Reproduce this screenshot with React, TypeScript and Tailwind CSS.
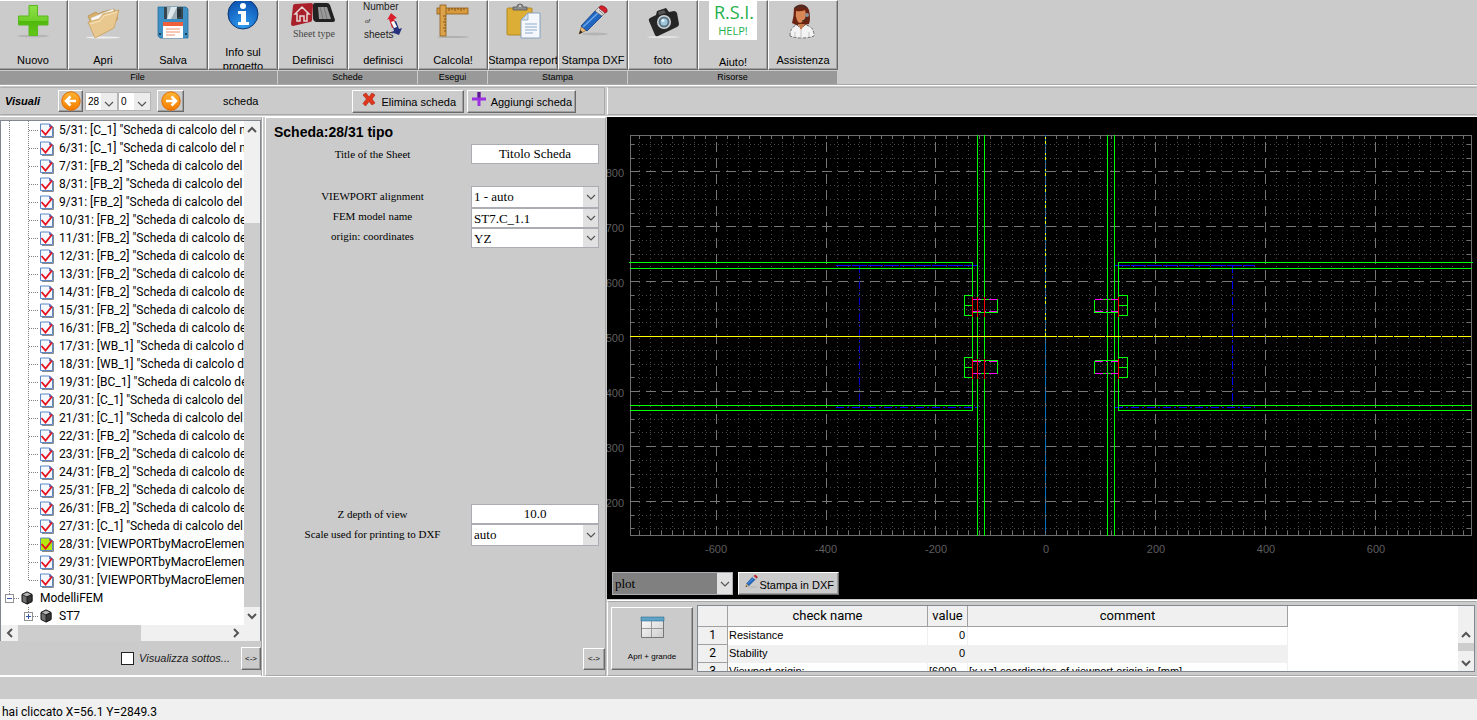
import React from "react";

const sans = "font-['Liberation_Sans',Arial,sans-serif]";
const serif = "font-['Liberation_Serif','Times_New_Roman',serif]";
const ui = "font-['Roboto','Segoe_UI',sans-serif]";
const raised =
  "border border-t-white border-l-white border-r-[#696969] border-b-[#696969] shadow-[inset_-1px_-1px_0_#a0a0a0] bg-[#cbcbcb]";

/* ---------- icons ---------- */

function PlusIcon() {
  return (
    <svg width="36" height="36" viewBox="0 0 36 36">
      <defs>
        <linearGradient id="pl" x1="0" y1="0" x2="0" y2="1">
          <stop offset="0" stopColor="#8fe04a" />
          <stop offset="0.5" stopColor="#6fcf2a" />
          <stop offset="0.51" stopColor="#4fb80c" />
          <stop offset="1" stopColor="#62c818" />
        </linearGradient>
      </defs>
      <ellipse cx="18" cy="33" rx="16" ry="1.3" fill="#b5b5b5" />
      <path d="M14 2.500h8.500v10.500H33v9H22.500v10.500H14V22H3.500v-9H14z" fill="url(#pl)" stroke="#58b81c" strokeWidth="1" />
    </svg>
  );
}

function FolderIcon() {
  return (
    <svg width="38" height="36" viewBox="0 0 38 36">
      <ellipse cx="19" cy="34.500" rx="17" ry="1" fill="#eee" />
      <path d="M4 13l8-4 2 2 4-2 12-3 4 10-22 16z" fill="#d9b06a" stroke="#b98c48" strokeWidth=".7" />
      <path d="M7 15L29 6l4 9-24 13z" fill="#fafafa" stroke="#ccc" strokeWidth=".5" />
      <path d="M4 19l11-3 4-5 16-4-5 18-19 10z" fill="#e8c88e" stroke="#c59a55" strokeWidth=".7" />
      <path d="M6 21l10-3 4-5 13-4" fill="none" stroke="#f7e4bd" />
    </svg>
  );
}

function FloppyIcon() {
  return (
    <svg width="34" height="36" viewBox="0 0 34 36">
      <path d="M2 4h28l2 2v29H4l-2-2z" fill="#3d8fc4" stroke="#2a6f9f" strokeWidth=".8" />
      <rect x="8" y="4" width="19" height="12" fill="#37474f" />
      <path d="M11 4h10v12H11z" fill="#9fb0b8" />
      <path d="M15 4h6l-6 12h-4z" fill="#dfe8ec" />
      <rect x="21" y="6" width="4" height="8" fill="#26343b" />
      <rect x="7" y="19" width="20" height="16" fill="#fff" />
      <rect x="7" y="19" width="20" height="4" fill="#f0603a" />
      <path d="M10 26h14M10 29h14M10 32h9" stroke="#f0906f" strokeWidth="1" />
      <rect x="3" y="30" width="2" height="2" fill="#173f5a" />
      <rect x="29" y="30" width="2" height="2" fill="#173f5a" />
    </svg>
  );
}

function InfoIcon() {
  return (
    <svg width="34" height="32" viewBox="0 0 34 32">
      <defs>
        <radialGradient id="inf" cx=".5" cy=".9" r=".9">
          <stop offset="0" stopColor="#2f9cf0" />
          <stop offset="1" stopColor="#0a4fae" />
        </radialGradient>
      </defs>
      <circle cx="17" cy="13" r="15" fill="url(#inf)" stroke="#0a3670" />
      <circle cx="17" cy="5" r="3" fill="#fff" />
      <path d="M12 10h8v11h3v3H12v-3h3v-8h-3z" fill="#fff" />
    </svg>
  );
}

function SheetTypeIcon() {
  return (
    <svg width="48" height="40" viewBox="0 0 48 40">
      <path d="M4 5q0-2 2-2l16-1q2 0 2 2l-1 15q0 2-2 2L4 25q-2 0-2-2z" fill="#a9202b" />
      <path d="M6 13l7-7 7 7h-2v7h-3v-5h-4v5H8v-7z" fill="none" stroke="#e6d6d6" strokeWidth="1.500" />
      <path d="M24 4q0-2 2-2h12q2 0 3 2l5 15q0 2-2 2H27q-2 0-3-3z" fill="#222" />
      <path d="M29 6h9l4 12H30z" fill="#9a9a9a" />
      <path d="M31 6l3 12M35 6l3 12" stroke="#777" />
      <text x="4" y="36" fontSize="10" fill="#444" fontFamily="Liberation Serif, serif">Sheet type</text>
    </svg>
  );
}

function NumberIcon() {
  return (
    <svg width="44" height="40" viewBox="0 0 44 40">
      <text x="2" y="9" fontSize="10" fill="#222" fontFamily="Liberation Sans, sans-serif">Number</text>
      <text x="4" y="22" fontSize="6" fontStyle="italic" fill="#222" fontFamily="Liberation Sans, sans-serif">of</text>
      <text x="3" y="37" fontSize="10" fill="#222" fontFamily="Liberation Sans, sans-serif">sheets</text>
      <path d="M26 19l4-7 6 5-3 1 3 7-5 2-3-9z" fill="#d8202c" />
      <path d="M31 22l4-2 3 8 3-1-3 7-8-3 3-1z" fill="#27307c" />
      <path d="M30 21l3-1 3 6-3 1z" fill="#fff" />
    </svg>
  );
}

function RulerIcon() {
  return (
    <svg width="36" height="36" viewBox="0 0 36 36">
      <ellipse cx="18" cy="34" rx="16" ry="1" fill="#b0b0b0" />
      <rect x="2" y="5" width="31" height="6" fill="#d79a3f" stroke="#8e5d18" strokeWidth=".8" />
      <rect x="5" y="2" width="6" height="31" fill="#dda34a" stroke="#8e5d18" strokeWidth=".8" />
      <path d="M14 5v3M17 5v2M20 5v3M23 5v2M26 5v3M29 5v2M8 13h3M9 16h2M8 19h3M9 22h2M8 25h3M9 28h2" stroke="#6b430c" strokeWidth=".8" />
    </svg>
  );
}

function ClipboardIcon() {
  return (
    <svg width="38" height="38" viewBox="0 0 38 38">
      <rect x="3" y="5" width="25" height="27" rx="1" fill="#dcae35" stroke="#a87d18" strokeWidth=".8" />
      <path d="M9 7V4h4q0-3 3-3t3 3h4v3z" fill="#8d8d8d" stroke="#555" strokeWidth=".8" />
      <circle cx="16" cy="3" r="1" fill="#ddd" />
      <path d="M24 10h12v25H17V17z" fill="#f4f8fc" stroke="#7f9dbd" strokeWidth=".9" />
      <path d="M24 10v7h-7z" fill="#cfdcea" stroke="#7f9dbd" strokeWidth=".7" />
      <path d="M21 21h12M21 24h12M21 27h12M21 30h8" stroke="#8fabc8" />
    </svg>
  );
}

function PencilIcon({ size }: { size: number }) {
  return (
    <svg width={size} height={size} viewBox="0 0 36 36">
      <ellipse cx="20" cy="31" rx="13" ry="1.500" fill="#b4b4b4" />
      <path d="M4 31l3-9 5 5z" fill="#e8b878" stroke="#8a5b2a" strokeWidth=".6" />
      <path d="M4 31l1.500-4 2 2.500z" fill="#222" />
      <path d="M6 23L20 8l7 5L12 28z" fill="#2166c0" stroke="#0e3c80" strokeWidth=".8" />
      <path d="M8 24L23 10" stroke="#6aa7ea" strokeWidth="1.600" />
      <path d="M20 8l4-4 7 5-4 4z" fill="#d9d9d9" stroke="#555" strokeWidth=".6" />
      <path d="M24 7l4 4M26 5l4 4" stroke="#777" strokeWidth=".8" />
      <path d="M25 3q2-1 5 1t2 5l-2 1-6-5z" fill="#d3202c" stroke="#801018" strokeWidth=".6" />
    </svg>
  );
}

function CameraIcon() {
  return (
    <svg width="38" height="36" viewBox="0 0 38 36">
      <ellipse cx="19" cy="34" rx="16" ry="1" fill="#e5e5e5" />
      <path d="M5 18q-1-2 1-3l6-3 1-4 9-3 3 4 5-1q2 0 3 2l2 11q0 2-2 3l-19 9q-2 1-3-1z" fill="#262626" />
      <path d="M14 9l6-2 2 3-7 2z" fill="#555" />
      <circle cx="20" cy="19" r="7" fill="#cfd6db" />
      <circle cx="20" cy="19" r="5.500" fill="#5d7482" />
      <circle cx="20" cy="19" r="3.500" fill="#9fc8df" />
      <circle cx="19" cy="17.500" r="1.500" fill="#e8f6ff" />
    </svg>
  );
}

function HelpIcon() {
  return (
    <svg width="48" height="39" viewBox="0 0 48 39">
      <rect width="48" height="39" fill="#fff" />
      <text x="25" y="18" textAnchor="middle" fontSize="18" fill="#1fb04c" fontFamily="Open Sans, sans-serif">R.S.I.</text>
      <text x="24" y="34" textAnchor="middle" fontSize="11" fill="#1fb04c" fontFamily="Open Sans, sans-serif">HELP!</text>
    </svg>
  );
}

function AssistantIcon() {
  return (
    <svg width="30" height="37" viewBox="0 0 30 37">
      <path d="M6 5q3-4 8-3.500T21 7q2 9 0 14l-5 1H8l-4-2Q6 13 6 5z" fill="#6b2412" />
      <path d="M8 8q5 1 9-1 2 6-1 10-2 3-4 3t-3-3q-2-4-1-9z" fill="#d98755" />
      <path d="M7 5q6-4 12 0" fill="none" stroke="#333" strokeWidth="1.200" />
      <path d="M19 12q1 5-5 6" fill="none" stroke="#333" />
      <circle cx="19" cy="12" r="2" fill="#8c939b" />
      <path d="M2 33q0-9 7-11l4 4 4-4q9 1 9 11-5 2-12 2T2 33z" fill="#f3f3f3" stroke="#555" strokeWidth=".8" strokeDasharray="3 1.500" />
      <path d="M10 21l3 6 4-6z" fill="#c97a4b" />
      <path d="M7 29v5M21 29v5M13 27v8" stroke="#c4c4c4" />
    </svg>
  );
}

function ArrowBall({ back }: { back?: boolean }) {
  return (
    <svg width="20" height="20" viewBox="0 0 20 20">
      <defs>
        <linearGradient id="ob" x1="0" y1="0" x2="0" y2="1">
          <stop offset="0" stopColor="#ffb433" />
          <stop offset="1" stopColor="#f57c00" />
        </linearGradient>
      </defs>
      <circle cx="10" cy="10" r="9.200" fill="url(#ob)" stroke="#e06a00" />
      <path
        d={back ? "M15 10H5M9.500 5.500L5 10l4.500 4.500" : "M5 10h10M10.500 5.500L15 10l-4.500 4.500"}
        fill="none"
        stroke="#fff"
        strokeWidth="2.600"
      />
    </svg>
  );
}

function Chevron({ dir = "down", bold }: { dir?: "down" | "up" | "left" | "right"; bold?: boolean }) {
  const d = {
    down: "M2 4l4 4 4-4",
    up: "M2 8l4-4 4 4",
    left: "M8 2L4 6l4 4",
    right: "M4 2l4 4-4 4",
  }[dir];
  return (
    <svg width="12" height="12" viewBox="0 0 12 12" className="shrink-0">
      <path d={d} fill="none" stroke="#555" strokeWidth={bold ? 2 : 1.2} />
    </svg>
  );
}

function PageIcon({ active }: { active?: boolean }) {
  return (
    <svg width="14" height="15" viewBox="0 0 14 15" className="shrink-0">
      <path d="M2 14.500h11.500V4" fill="none" stroke="#8a8a8a" />
      <path d="M.5 1h9l3 3v9.500H.5z" fill={active ? "#b4e610" : "#f3f9ff"} stroke="#5b87c7" />
      <path d="M9.500 1l3 3h-3z" fill="#5560a8" stroke="#5560a8" strokeWidth=".5" />
      <path d="M1.500 7l4 4.500L12 3.500" fill="none" stroke="#e8101c" strokeWidth="1.800" />
    </svg>
  );
}

function CubeIcon() {
  return (
    <svg width="12" height="14" viewBox="0 0 12 14" className="shrink-0">
      <path d="M6 1l5 2.500v7L6 13l-5-2.500v-7z" fill="#707070" stroke="#111" />
      <path d="M6 1l5 2.500L6 6 1 3.500z" fill="#b5b5b5" stroke="#111" strokeWidth=".8" />
      <path d="M6 6l5-2.500v7L6 13z" fill="#383838" stroke="#111" strokeWidth=".8" />
    </svg>
  );
}

/* ---------- toolbar ---------- */

type Tool = { label: string; icon: React.ReactNode; kind?: "two" | "flush" | "low" };
const groups: { name: string; tools: Tool[] }[] = [
  {
    name: "File",
    tools: [
      { label: "Nuovo", icon: <PlusIcon /> },
      { label: "Apri", icon: <FolderIcon /> },
      { label: "Salva", icon: <FloppyIcon /> },
      { label: "Info sul progetto", icon: <InfoIcon />, kind: "two" },
    ],
  },
  {
    name: "Schede",
    tools: [
      { label: "Definisci", icon: <SheetTypeIcon />, kind: "flush" },
      { label: "definisci", icon: <NumberIcon />, kind: "flush" },
    ],
  },
  { name: "Esegui", tools: [{ label: "Calcola!", icon: <RulerIcon /> }] },
  {
    name: "Stampa",
    tools: [
      { label: "Stampa report", icon: <ClipboardIcon /> },
      { label: "Stampa DXF", icon: <PencilIcon size={36} /> },
    ],
  },
  {
    name: "Risorse",
    tools: [
      { label: "foto", icon: <CameraIcon /> },
      { label: "Aiuto!", icon: <HelpIcon />, kind: "low" },
      { label: "Assistenza", icon: <AssistantIcon /> },
    ],
  },
];

const iconBox = {
  normal: "flex h-[52px] shrink-0 items-start pt-[2px]",
  flush: "flex h-[52px] shrink-0 items-start",
  low: "flex h-[54px] shrink-0 items-start",
  two: "flex h-[44px] shrink-0 items-start",
};

function Toolbar() {
  return (
    <div className="-ml-[2px] flex h-[85px] shrink-0 border-b border-[#a8a8a8]">
      {groups.map((g) => (
        <div key={g.name} className="flex flex-col">
          <div className="flex">
            {g.tools.map((t) => (
              <button key={t.label} type="button" className={`${raised} flex h-[70px] w-[70px] flex-col items-center overflow-hidden text-[11px]`}>
                <span className={iconBox[t.kind ?? "normal"]}>{t.icon}</span>
                <span className={t.kind === "two" ? "w-12 text-center leading-[14px]" : "whitespace-nowrap leading-[14px]"}>{t.label}</span>
              </button>
            ))}
          </div>
          <div className="mt-px h-[13px] border-r border-[#cbcbcb] bg-[#999] text-center text-[9px] leading-[12px]">{g.name}</div>
        </div>
      ))}
    </div>
  );
}

/* ---------- second bar ---------- */

function MiniSelect({ label, value }: { label: string; value: string }) {
  return (
    <span className="relative flex h-[19px] w-[33px] border border-[#b5b5b5] bg-white">
      <select aria-label={label} className="w-full appearance-none bg-white pl-[2px] text-[10px] outline-none">
        <option>{value}</option>
      </select>
      <span className="pointer-events-none absolute inset-y-0 right-0 flex w-4 items-end justify-center bg-[#ececec]">
        <Chevron />
      </span>
    </span>
  );
}

function ViewsBar() {
  return (
    <div className="flex h-[31px] shrink-0 border-t border-white pb-px pt-px">
      <div className="flex w-[605px] items-center border border-t-[#b0b0b0] border-r-[#a8a8a8] border-b-[#a8a8a8] border-l-transparent pl-1">
        <strong className="w-[53px] text-[11px] italic">Visuali</strong>
        <button type="button" aria-label="Precedente" className={`${raised} flex h-[22px] w-[25px] items-center justify-center`}>
          <ArrowBall back />
        </button>
        <span className="ml-[2px] flex">
          <MiniSelect label="Scheda" value="28" />
          <MiniSelect label="Vista" value="0" />
        </span>
        <button type="button" aria-label="Successiva" className={`${raised} ml-[6px] flex h-[22px] w-[27px] items-center justify-center`}>
          <ArrowBall />
        </button>
        <span className="ml-[39px] text-[11px]">scheda</span>
        <button type="button" className={`${raised} ml-auto flex h-[23px] w-[112px] items-center justify-between whitespace-nowrap pl-2 pr-[7px] text-[11px]`}>
          <svg width="16" height="15" viewBox="0 0 16 15" className="mb-1">
            <path d="M2 3l3-2 3 4 3-4 3 2-3 4 3 4-3 2-3-3.500L4.500 14 2 11.500 5.500 7z" fill="#e0361c" stroke="#a8200c" strokeWidth=".6" />
          </svg>
          <span className="pt-[3px]">Elimina scheda</span>
        </button>
        <button type="button" className={`${raised} ml-[3px] mr-7 flex h-[23px] w-[109px] items-center justify-between whitespace-nowrap pl-1 pr-[3px] text-[11px]`}>
          <svg width="14" height="14" viewBox="0 0 14 14" className="mb-1">
            <path d="M5.500 0h3v5.500H14v3H8.500V14h-3V8.500H0v-3h5.500z" fill="#9a30e0" />
            <path d="M5.500 0h3v5.500h-3z" fill="#5c1a90" />
          </svg>
          <span className="pt-[3px]">Aggiungi scheda</span>
        </button>
      </div>
      <div className="ml-[2px] flex-1 border border-t-[#b0b0b0] border-r-transparent border-b-[#a8a8a8] border-l-white" />
    </div>
  );
}

/* ---------- tree ---------- */

const N = '"Scheda di calcolo del nodo';
const kinds: [number, string][] = [
  [5, "[C_1] " + N], [6, "[C_1] " + N], [7, "[FB_2] " + N], [8, "[FB_2] " + N], [9, "[FB_2] " + N],
  [10, "[FB_2] " + N], [11, "[FB_2] " + N], [12, "[FB_2] " + N], [13, "[FB_2] " + N], [14, "[FB_2] " + N],
  [15, "[FB_2] " + N], [16, "[FB_2] " + N], [17, "[WB_1] " + N], [18, "[WB_1] " + N], [19, "[BC_1] " + N],
  [20, "[C_1] " + N], [21, "[C_1] " + N], [22, "[FB_2] " + N], [23, "[FB_2] " + N], [24, "[FB_2] " + N],
  [25, "[FB_2] " + N], [26, "[FB_2] " + N], [27, "[C_1] " + N],
  [28, "[VIEWPORTbyMacroElements]"], [29, "[VIEWPORTbyMacroElements]"], [30, "[VIEWPORTbyMacroElements]"],
];

function Branch({ kind }: { kind: "item" | "last" | "root" | "child" }) {
  const width = kind === "root" ? 20 : 39;
  return (
    <svg width={width} height="18" viewBox={`0 0 ${width} 18`} className="shrink-0" shapeRendering="crispEdges">
      <g stroke="#808080" strokeDasharray="1 1">
        {(kind === "item" || kind === "last") && <path d="M8.500 0v18" />}
        {kind === "item" && <path d="M27.500 0v18" />}
        {kind === "last" && <path d="M27.500 0v9" />}
        {(kind === "item" || kind === "last") && <path d="M28 9.500h10" />}
        {kind === "root" && <path d="M8.500 0v5M13 9.500h6" />}
        {kind === "child" && <path d="M27.500 0v5M32 9.500h6" />}
      </g>
      {kind === "root" && (
        <g stroke="#919191" fill="#fff">
          <path d="M4.500 5.500h8v8h-8z" />
          <path d="M6 9.500h5" stroke="#3456a8" />
        </g>
      )}
      {kind === "child" && (
        <g stroke="#919191" fill="#fff">
          <path d="M23.500 5.500h8v8h-8z" />
          <path d="M25 9.500h5M27.500 7v5" stroke="#3456a8" />
        </g>
      )}
    </svg>
  );
}

const treeRow = "flex h-[18px] shrink-0 items-center whitespace-nowrap text-[12px] leading-[18px]";

function TreePanel() {
  return (
    <section className="flex w-[263px] shrink-0 flex-col border-r border-b border-white">
      <div className="flex flex-1 flex-col border-r border-b border-[#a8a8a8] pt-[3px]">
        <div className="flex min-h-0 flex-1 border border-b-0 border-[#828790] bg-white">
          <div className="flex min-w-0 flex-1 flex-col">
            <ul className={`${ui} flex min-h-0 flex-1 flex-col justify-end overflow-hidden`}>
              {kinds.map(([n, t]) => (
                <li key={n} className={treeRow}>
                  <Branch kind={n === 30 ? "last" : "item"} />
                  <PageIcon active={n === 28} />
                  <span className="ml-[5px]">{n}/31: {t}</span>
                </li>
              ))}
              <li className={treeRow}>
                <Branch kind="root" />
                <CubeIcon />
                <span className="ml-[7px]">ModelliFEM</span>
              </li>
              <li className={treeRow}>
                <Branch kind="child" />
                <CubeIcon />
                <span className="ml-[7px]">ST7</span>
              </li>
            </ul>
            <div className="flex h-4 shrink-0 items-center bg-[#f0f0f0]">
              <span className="flex w-[17px] justify-center"><Chevron dir="left" bold /></span>
              <span className="h-full w-[123px] bg-[#cdcdcd]" />
              <span className="ml-auto flex w-[17px] justify-center"><Chevron dir="right" bold /></span>
            </div>
          </div>
          <div className="flex w-4 shrink-0 flex-col items-center bg-[#f0f0f0]">
            <span className="flex h-[17px] items-center"><Chevron dir="up" bold /></span>
            <span className="h-[85px]" />
            <span className="w-full flex-1 bg-[#cdcdcd]" />
            <span className="flex h-[34px] items-start pt-[3px]"><Chevron dir="down" bold /></span>
          </div>
        </div>
        <div className="flex h-[35px] shrink-0 items-center justify-end">
          <label className="flex items-center text-[11px] italic text-[#222]">
            <input type="checkbox" className="mr-[5px] h-[13px] w-[13px] appearance-none border border-[#222] bg-white" />
            Visualizza sottos...
          </label>
          <button type="button" className={`${raised} ml-[11px] h-[23px] w-5 text-[8px]`}>&lt;-&gt;</button>
        </div>
      </div>
    </section>
  );
}

/* ---------- sheet form ---------- */

function FormSelect({ id, value, tall }: { id: string; value: string; tall?: boolean }) {
  return (
    <span className={tall ? "relative flex h-[22px]" : "relative flex h-5"}>
      <select id={id} className="w-full appearance-none border border-[#abadb3] bg-white pl-[2px] text-[13px] outline-none">
        <option>{value}</option>
      </select>
      <span className="pointer-events-none absolute inset-y-px right-px flex w-[15px] items-center justify-center bg-[#e1e1e1]">
        <Chevron />
      </span>
    </span>
  );
}

const formGrid = `${serif} grid grid-cols-[197px_128px] text-center text-[11px]`;
const field = "h-5 w-full border border-[#abadb3] bg-white text-center text-[13px] outline-none";

function SheetPanel() {
  return (
    <section className="ml-[2px] flex w-[341px] shrink-0 flex-col border border-t-white border-r-[#a8a8a8] border-b-[#a8a8a8] border-l-white pl-2">
      <h2 className="mt-[5px] h-[21px] text-[14px] font-bold leading-[18px]">Scheda:28/31 tipo</h2>
      <div className={formGrid}>
        <label htmlFor="title" className="leading-5">Title of the Sheet</label>
        <input id="title" defaultValue="Titolo Scheda" className={field} />
      </div>
      <div className={`${formGrid} mt-[22px]`}>
        <label htmlFor="align" className="leading-5">VIEWPORT alignment</label>
        <FormSelect id="align" value="1 - auto" tall />
        <label htmlFor="fem" className="leading-4">FEM model name</label>
        <FormSelect id="fem" value="ST7.C_1.1" />
        <label htmlFor="origin" className="leading-4">origin: coordinates</label>
        <FormSelect id="origin" value="YZ" />
      </div>
      <div className="flex-1" />
      <div className={`${formGrid} mb-[102px]`}>
        <label htmlFor="depth" className="leading-5">Z depth of view</label>
        <input id="depth" defaultValue="10.0" className={field} />
        <label htmlFor="scale" className="leading-5">Scale used for printing to DXF</label>
        <FormSelect id="scale" value="auto" tall />
      </div>
      <button type="button" className={`${raised} mb-[5px] h-[22px] w-[22px] self-end text-[8px]`}>&lt;-&gt;</button>
    </section>
  );
}

/* ---------- plot ---------- */

const X0 = 630, X1 = 1471, Y0 = 135, Y1 = 535;
const px = (k: number) => Math.round(1045.3 + k * 10.983) + 0.5;
const py = (k: number) => Math.round(336.2 + k * 13.73) + 0.5;
const range = (a: number, b: number) => Array.from({ length: b - a + 1 }, (_, i) => a + i);
const cols = range(-37, 38);
const rows = range(-14, 14);

function Bolt({ y, flip, right }: { y: number; flip?: boolean; right?: boolean }) {
  const s = right ? 1094.5 : 972.5;
  const e = right ? 1118.5 : 997.5;
  const far = right ? s : e;
  const head = right ? 1127.5 : 964.5;
  const wall = right ? e : s;
  const top = flip ? y + 3 : y + 4;
  const bottom = flip ? y + 16 : y + 17;
  return (
    <g>
      <path d={`M${wall} ${y}H${head}V${y + 20}H${wall}M${head} ${y + 10}H${wall}`} stroke="#0f0" />
      <path d={`M${s} ${top}H${e}M${s} ${bottom}H${e}M${far} ${top}V${bottom}`} stroke="#0f0" />
      <path d={`M${s} ${flip ? y + 4 : y + 4}H${e}M${s} ${flip ? y + 16 : y + 16}H${e}`} stroke="#f0f" strokeDasharray="8 3 2 3" />
      <path d={right ? `M${wall} ${y + 1}v20` : `M972.5 ${y + 1}v20M977.5 ${y + 1}v20M984.5 ${y + 1}v20`} stroke="#f00" />
    </g>
  );
}

function Plot() {
  return (
    <svg viewBox="607 117 870 450" preserveAspectRatio="xMinYMin slice" className="min-h-0 w-full flex-1" fill="none">
      <g shapeRendering="crispEdges" strokeWidth="1">
        <g stroke="#4a4a4a" strokeDasharray="1 3">
          {cols.filter((k) => k % 10).map((k) => <path key={k} d={`M${px(k)} ${Y1}V${Y0}`} />)}
          {rows.filter((k) => k % 4).map((k) => <path key={k} d={`M${X0} ${py(k)}H${X1}`} />)}
        </g>
        <g stroke="#6e6e6e">
          <path d={`M${X0 + 0.5} ${Y0 + 0.5}H${X1 + 0.5}V${Y1 + 0.5}H${X0 + 0.5}z`} />
          {cols.map((k) => <path key={k} d={`M${px(k)} ${Y0}v4M${px(k)} ${Y1}v-4`} />)}
          {rows.map((k) => <path key={k} d={`M${X0} ${py(k)}h4M${X1} ${py(k)}h-4`} />)}
        </g>
        <g stroke="#767676" strokeDasharray="10 6">
          {cols.filter((k) => k % 10 === 0).map((k) => <path key={k} d={`M${px(k)} ${Y1 + 1}V${Y0}`} />)}
          {rows.filter((k) => k % 4 === 0).map((k) => <path key={k} d={`M${X0} ${py(k)}H${X1}`} />)}
        </g>
        <path d="M1045.5 135V535" stroke="#0072bd" strokeDasharray="12 2 1 1" />
        <path d="M1045.5 137V336" stroke="#ff0" strokeDasharray="2 2 3 9" />
        <path d="M836 265.500H977M1115 265.500H1255" stroke="#00f" strokeDasharray="15 1" />
        <path d="M836 407.500H977M1115 407.500H1255" stroke="#00f" strokeDasharray="8 3 2 3" />
        <path d="M859.500 265V407" stroke="#0000c8" strokeDasharray="8 3 2 3" />
        <path d="M1232.500 265V407" stroke="#00f" strokeDasharray="8 3 2 3" />
        <g stroke="#0f0">
          <path d="M629 262.500H972.500V410.500H630M630 268.500H972M630 405.500H972" />
          <path d="M1473 262.500H1118.500V410.500H1472M1118 268.500H1472M1118 405.500H1472" />
          <path d="M977.500 135V536M984.500 135V536M1107.500 135V536M1114.500 135V536" />
        </g>
        <path d="M630 336.500H1045" stroke="#ff0" />
        <path d="M1042 336.500H1471" stroke="#ff0" strokeDasharray="15 1" />
        <Bolt y={295.5} />
        <Bolt y={357.5} flip />
        <Bolt y={295.5} right />
        <Bolt y={357.5} flip right />
      </g>
      <g fill="#5e5e5e" fontSize="11" fontFamily="Liberation Sans, sans-serif">
        {[800, 700, 600, 500, 400, 300, 200].map((v, i) => (
          <text key={v} x="624" y={177 + i * 55} textAnchor="end">{v}</text>
        ))}
        {[-600, -400, -200, 0, 200, 400, 600].map((v, i) => (
          <text key={v} x={716 + i * 110} y="553" textAnchor="middle">{v}</text>
        ))}
      </g>
    </svg>
  );
}

function PlotPanel() {
  return (
    <div className="flex min-h-0 flex-1 flex-col bg-black">
      <Plot />
      <div className="flex shrink-0 items-center gap-[5px] pb-1 pl-[5px] pt-[5px]">
        <span className="relative flex h-[23px] w-[121px]">
          <select aria-label="Tipo di vista" className={`${serif} w-full appearance-none border border-[#abadb3] bg-[#808080] pl-[2px] text-[13px] outline-none`}>
            <option>plot</option>
          </select>
          <span className="pointer-events-none absolute inset-y-px right-px flex w-[15px] items-center justify-center bg-[#e1e1e1]">
            <Chevron />
          </span>
        </span>
        <button type="button" className={`${raised} flex h-[23px] w-[101px] items-center justify-between whitespace-nowrap pl-[5px] pr-1 text-[11px]`}>
          <span className="mb-1"><PencilIcon size={15} /></span>
          <span className="pt-[3px]">Stampa in DXF</span>
        </button>
      </div>
    </div>
  );
}

/* ---------- check table ---------- */

const checks = [
  ["Resistance", "0", ""],
  ["Stability", "0", ""],
  ["Viewport origin:", "[6000...", "[x,y,z] coordinates of viewport origin in [mm]"],
];

function ChecksPanel() {
  const th = "border-r border-b border-[#a0a0a0] bg-[#f0f0f0] p-0 text-center font-normal";
  const td = "overflow-hidden whitespace-nowrap border-r border-[#f0f0f0] p-0 leading-[17px]";
  return (
    <div className="mt-[2px] flex h-[75px] shrink-0 border border-t-[#a8a8a8] border-r-transparent border-b-[#a8a8a8] border-l-white pl-[3px] pr-px pt-[3px] shadow-[0_-1px_0_#fff,0_1px_0_#fff]">
      <button type="button" className={`${raised} mt-[2px] flex h-[63px] w-[82px] shrink-0 flex-col items-center pt-2 text-[8px]`}>
        <svg width="25" height="24" viewBox="0 0 25 24">
          <defs>
            <linearGradient id="cell" x1="0" y1="0" x2="1" y2="1">
              <stop offset="0" stopColor="#fff" />
              <stop offset="1" stopColor="#ccc" />
            </linearGradient>
          </defs>
          <path d="M1.500 1.500h22v20h-22z" fill="url(#cell)" stroke="#777" />
          <path d="M1 1h23v4H1z" fill="#5fa3c7" stroke="#2f6d92" strokeWidth=".6" />
          <path d="M2 12.500h21M11.500 5v16" stroke="#999" />
        </svg>
        <span className="mt-[12px] leading-[10px]">Apri + grande</span>
      </button>
      <div className="ml-1 flex h-[67px] min-w-0 flex-1 overflow-hidden border border-[#828790] bg-white">
        <table className="w-[590px] shrink-0 table-fixed border-separate border-spacing-0 self-start text-[11px]">
          <colgroup>
            <col className="w-[30px]" />
            <col className="w-[200px]" />
            <col className="w-10" />
            <col className="w-[320px]" />
          </colgroup>
          <thead className={`${ui} text-[13px]`}>
            <tr className="h-5">
              <th className={th} aria-label="Numero" />
              <th className={th}>check name</th>
              <th className={th}>value</th>
              <th className={th}>comment</th>
            </tr>
          </thead>
          <tbody>
            {checks.map(([name, value, comment], i) => (
              <tr key={name} className={i % 2 ? "h-[18px] bg-[#f0f0f0]" : "h-[18px] bg-white"}>
                <th className={`${th} ${ui} text-[12px] leading-[17px]`}>{i + 1}</th>
                <td className={`${td} pl-px`}>{name}</td>
                <td className={i < 2 ? `${td} pr-[2px] text-right` : `${td} pl-px`}>{value}</td>
                <td className={`${td} pl-px`}>{comment}</td>
              </tr>
            ))}
          </tbody>
        </table>
        <div className="ml-auto flex w-4 flex-col items-center bg-[#f0f0f0] pt-[23px]">
          <Chevron dir="up" bold />
          <span className="mt-[2px] h-2 w-full shrink-0 bg-[#cdcdcd]" />
          <span className="mt-[6px] flex"><Chevron dir="down" bold /></span>
        </div>
      </div>
    </div>
  );
}

export default function App() {
  return (
    <div className={`${sans} flex h-screen flex-col overflow-hidden bg-[#cbcbcb] text-black`}>
      <Toolbar />
      <ViewsBar />
      <main className="flex min-h-0 flex-1 border-t border-white">
        <TreePanel />
        <SheetPanel />
        <div className="ml-px flex min-w-0 flex-1 flex-col">
          <PlotPanel />
          <ChecksPanel />
        </div>
      </main>
      <div className="h-[23px] shrink-0 border-t border-white" />
      <footer className={`${ui} h-[21px] shrink-0 bg-[#f0f0f0] pl-[2px] pt-[4px] text-[12px] leading-[18px]`}>
        hai cliccato X=56.1 Y=2849.3
      </footer>
    </div>
  );
}
